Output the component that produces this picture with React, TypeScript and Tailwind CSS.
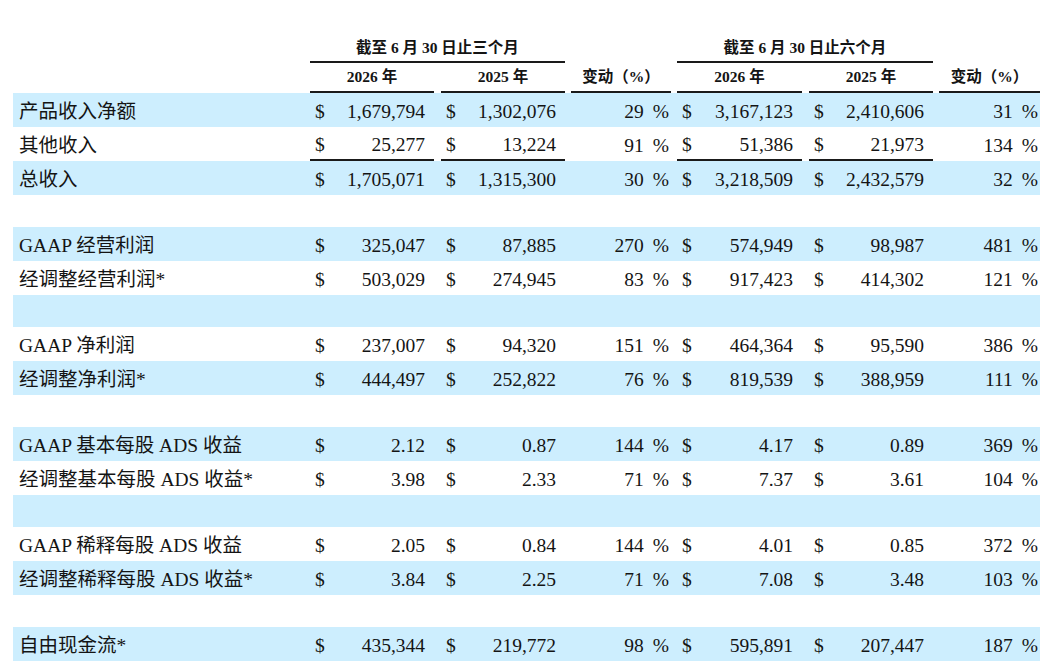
import React from "react";

type Row = {
  label?: string;
  v?: [string, string, string, string, string, string];
  blue: boolean;
  underline?: boolean;
};

const rows: Row[] = [
  { label: "产品收入净额", v: ["1,679,794", "1,302,076", "29", "3,167,123", "2,410,606", "31"], blue: true },
  { label: "其他收入", v: ["25,277", "13,224", "91", "51,386", "21,973", "134"], blue: false, underline: true },
  { label: "总收入", v: ["1,705,071", "1,315,300", "30", "3,218,509", "2,432,579", "32"], blue: true },
  { blue: false },
  { label: "GAAP 经营利润", v: ["325,047", "87,885", "270", "574,949", "98,987", "481"], blue: true },
  { label: "经调整经营利润*", v: ["503,029", "274,945", "83", "917,423", "414,302", "121"], blue: false },
  { blue: true },
  { label: "GAAP 净利润", v: ["237,007", "94,320", "151", "464,364", "95,590", "386"], blue: false },
  { label: "经调整净利润*", v: ["444,497", "252,822", "76", "819,539", "388,959", "111"], blue: true },
  { blue: false },
  { label: "GAAP 基本每股 ADS 收益", v: ["2.12", "0.87", "144", "4.17", "0.89", "369"], blue: true },
  { label: "经调整基本每股 ADS 收益*", v: ["3.98", "2.33", "71", "7.37", "3.61", "104"], blue: false },
  { blue: true },
  { label: "GAAP 稀释每股 ADS 收益", v: ["2.05", "0.84", "144", "4.01", "0.85", "372"], blue: false },
  { label: "经调整稀释每股 ADS 收益*", v: ["3.84", "2.25", "71", "7.08", "3.48", "103"], blue: true },
  { blue: false },
  { label: "自由现金流*", v: ["435,344", "219,772", "98", "595,891", "207,447", "187"], blue: true },
];

const FONT = { fontFamily: '"Liberation Serif", "Noto Sans CJK SC", serif' };

function Amount({ value, cls, underline }: { value: string; cls: string; underline?: boolean }) {
  return (
    <div
      className={`${cls} flex h-full items-center justify-between pl-[5px] pr-[9px] pt-[3px] ${
        underline ? "border-b-2 border-[#1a1a1a]" : ""
      }`}
    >
      <span>$</span>
      <span>{value}</span>
    </div>
  );
}

function Change({ value, cls }: { value: string; cls: string }) {
  return (
    <div className={`${cls} flex h-full items-center justify-end pr-[2px] pt-[3px]`}>
      <span>{value}</span>
      <span className="ml-[9px]">%</span>
    </div>
  );
}

export default function App() {
  return (
    <div className="min-h-[669px] w-[1053px] bg-white text-[#141414]" style={FONT}>
      <div className="pl-[13px] pt-[35px]">
        {/* Title row */}
        <div className="flex h-[28px] text-[15.5px] font-bold">
          <div className="w-[297px]" />
          <div className="flex w-[255px] items-center justify-center border-b-2 border-[#1a1a1a] pb-[1px]">
            截至 6 月 30 日止三个月
          </div>
          <div className="ml-[6px] w-[100px]" />
          <div className="ml-[6px] flex w-[256px] items-center justify-center border-b-2 border-[#1a1a1a] pb-[1px]">
            截至 6 月 30 日止六个月
          </div>
        </div>
        {/* Year row */}
        <div className="flex h-[30px] text-[15.5px] font-bold">
          <div className="w-[297px]" />
          <div className="flex w-[124px] items-center justify-center border-b-2 border-[#1a1a1a]">2026 年</div>
          <div className="ml-[7px] flex w-[124px] items-center justify-center border-b-2 border-[#1a1a1a]">2025 年</div>
          <div className="ml-[6px] flex w-[100px] items-center justify-center border-b-2 border-[#1a1a1a]">变动（%）</div>
          <div className="ml-[6px] flex w-[125px] items-center justify-center border-b-2 border-[#1a1a1a]">2026 年</div>
          <div className="ml-[7px] flex w-[124px] items-center justify-center border-b-2 border-[#1a1a1a]">2025 年</div>
          <div className="ml-[6px] flex w-[101px] items-center justify-center border-b-2 border-[#1a1a1a]">变动（%）</div>
        </div>
        {/* Body */}
        {rows.map((r, i) => (
          <div
            key={i}
            className={`flex w-[1027px] text-[19.5px] ${r.v ? "h-[34px]" : "h-[32px]"} ${
              r.blue ? "bg-[#cdeefe]" : "bg-white"
            }`}
          >
            {r.v ? (
              <>
                <div className="flex w-[297px] items-center pl-[6px] pt-[3px]">{r.label}</div>
                <Amount value={r.v[0]} cls="w-[124px]" underline={r.underline} />
                <Amount value={r.v[1]} cls="ml-[7px] w-[124px]" underline={r.underline} />
                <Change value={r.v[2]} cls="ml-[6px] w-[100px]" />
                <Amount value={r.v[3]} cls="ml-[6px] w-[125px]" underline={r.underline} />
                <Amount value={r.v[4]} cls="ml-[7px] w-[124px]" underline={r.underline} />
                <Change value={r.v[5]} cls="ml-[6px] w-[101px]" />
              </>
            ) : null}
          </div>
        ))}
      </div>
    </div>
  );
}
